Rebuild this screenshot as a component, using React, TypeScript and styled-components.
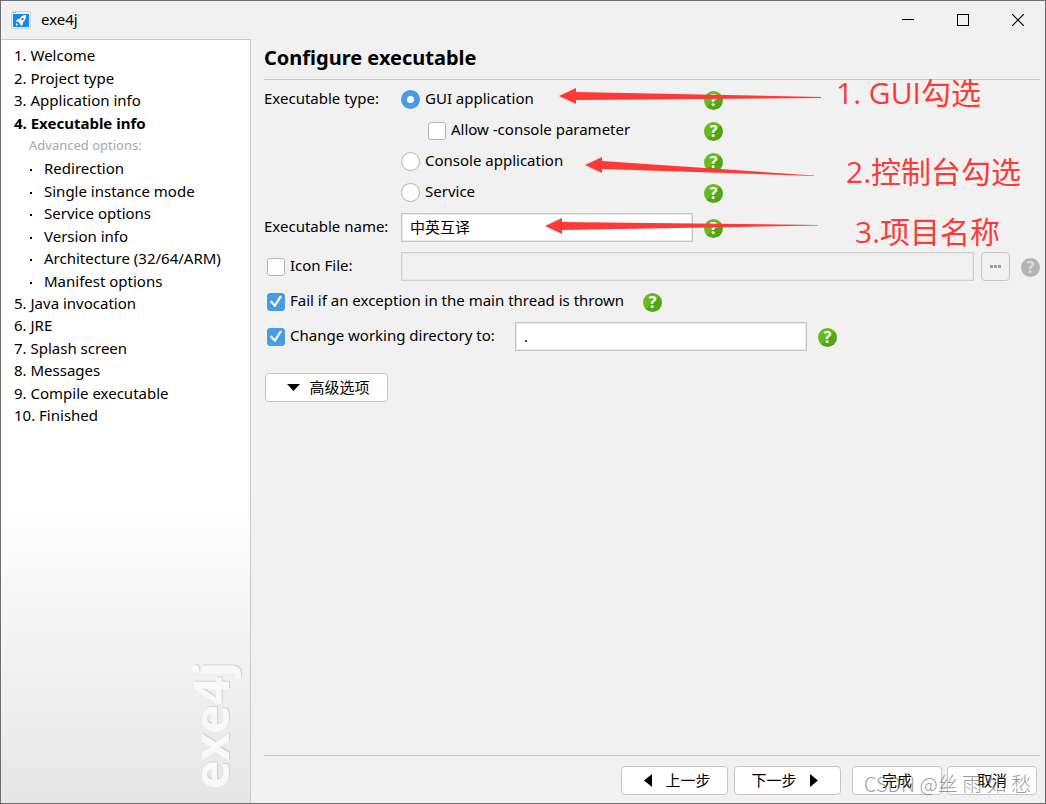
import React from "react";
import styled, { createGlobalStyle, css } from "styled-components";

const GlobalStyle = createGlobalStyle`
  * { box-sizing: border-box; }
  body {
    margin: 0;
    background: #f1f1f1;
    color: #000;
    font: 15px/20px "Noto Sans", "Noto Sans CJK SC", sans-serif;
  }
  button, input { font: inherit; color: inherit; }
`;

const Window = styled.div`
  position: relative;
  display: flex;
  flex-direction: column;
  min-height: 100vh;
  border: 1px solid #6e6e6e;
  background: #f1f1f1;
`;

const TitleBar = styled.header`
  display: flex;
  align-items: center;
  height: 38px;
  padding-left: 10px;
  gap: 10px;
`;

const AppName = styled.span`
  flex: 1;
  padding-bottom: 2px;
`;

const WindowControls = styled.div`
  display: flex;
`;

const WindowButton = styled.button`
  display: grid;
  place-items: center;
  width: 55px;
  height: 38px;
  padding: 0;
  border: 0;
  background: none;
`;

const Body = styled.div`
  display: flex;
  flex: 1;
`;

const Sidebar = styled.nav`
  display: flex;
  flex-direction: column;
  justify-content: space-between;
  width: 250px;
  flex: none;
  border-top: 1px solid #c8c8c8;
  border-right: 1px solid #c8c8c8;
  background: linear-gradient(#fff 60%, #e6e6e6);
`;

const Steps = styled.ul`
  margin: 0;
  padding: 4px 0 0 13px;
  list-style: none;
`;

type StepKind = "step" | "current" | "heading" | "option";

const Step = styled.li<{ $kind: StepKind }>`
  height: 22px;
  line-height: 22px;
  white-space: nowrap;
  &:nth-child(odd) { height: 23px; }
  ${({ $kind }) => $kind === "current" && css`font-weight: 700;`}
  ${({ $kind }) => $kind === "heading" && css`
    padding-left: 15px;
    color: #a8a8a8;
    font-size: 13px;
  `}
  ${({ $kind }) => $kind === "option" && css`
    display: flex;
    align-items: center;
    gap: 12px;
    padding-left: 16px;
    &::before {
      content: "";
      width: 2px;
      height: 2px;
      margin-top: 4px;
      background: #000;
    }
  `}
`;

const Brand = styled.div`
  align-self: flex-end;
  margin-right: 8px;
  padding: 14px 0;
  color: #f9f9f9;
  font-size: 49px;
  font-weight: 700;
  line-height: 64px;
  writing-mode: vertical-rl;
  transform: rotate(180deg);
  text-shadow: 1px 1px 1px #d0d0d0;
`;

const Main = styled.main`
  display: flex;
  flex-direction: column;
  flex: 1;
  min-width: 0;
  padding: 0 5px 0 13px;
`;

const PageTitle = styled.h1`
  margin: 0 0 4px;
  padding: 5px 0 7px;
  border-bottom: 1px solid #c8c8c8;
  font-size: 20px;
  line-height: 28px;
`;

const Form = styled.form`
  display: flex;
  flex-direction: column;
  flex: 1;
  gap: 10px;
`;

const TypeGroup = styled.div`
  display: grid;
  grid-template-columns: 137px 303px auto;
  grid-auto-rows: 31px;
  justify-content: start;
  align-items: center;
  margin-bottom: -5px;
`;

const TypeChoice = styled.div<{ $nested?: boolean }>`
  grid-column: 2;
  padding-left: ${({ $nested }) => ($nested ? "27px" : "0")};
`;

const Row = styled.div<{ $short?: boolean }>`
  display: flex;
  align-items: center;
  height: ${({ $short }) => ($short ? "21px" : "29px")};
  gap: 11px;
`;

const Caption = styled.span`
  padding-bottom: 3px;
`;

const FieldLabel = styled.label`
  width: 126px;
  padding-bottom: 3px;
  white-space: nowrap;
`;

const Choice = styled.label<{ $width?: number }>`
  display: flex;
  align-items: center;
  flex: none;
  gap: 5px;
  width: ${({ $width }) => ($width ? `${$width}px` : "auto")};
  white-space: nowrap;
`;

const CheckBox = styled.input.attrs({ type: "checkbox" })`
  appearance: none;
  flex: none;
  width: 18px;
  height: 18px;
  margin: 0;
  border: 1px solid #b4b4b4;
  border-radius: 3px;
  background: #fff;
  &:checked {
    border-color: #4a9ae6;
    background: #4a9ae6;
  }
  &:checked::before {
    content: "";
    display: block;
    width: 16px;
    height: 16px;
    background: #fff;
    clip-path: polygon(12% 51%, 23% 44%, 42% 66%, 75% 13%, 87% 20%, 43% 88%);
  }
`;

const OuterCheckBox = styled(CheckBox)`
  margin-left: 3px;
`;

const Radio = styled.input.attrs({ type: "radio" })`
  appearance: none;
  flex: none;
  width: 19px;
  height: 19px;
  margin: 0;
  border: 1px solid #b4b4b4;
  border-radius: 50%;
  background: #fff;
  &:checked { border: 6px solid #4a9ae6; }
`;

const TextBox = styled.input.attrs({ type: "text" })<{ $fill?: boolean }>`
  flex: ${({ $fill }) => ($fill ? "1" : "none")};
  min-width: 0;
  width: 292px;
  height: 29px;
  padding: 0 8px 2px;
  border: 1px solid #c6c6c6;
  box-shadow: inset 0 0 0 1px #e8e8e8;
  background: #fff;
  &:disabled { background: #f1f1f1; border-color: #d0d0d0; }
`;

const Help = styled.button`
  flex: none;
  width: 19px;
  height: 19px;
  margin-top: 2px;
  padding: 0;
  border: 0;
  border-radius: 50%;
  background: linear-gradient(135deg, #68bb1e 50%, #52a616 50%);
  color: #fff;
  font: 700 16px/19px "Open Sans", sans-serif;
  text-align: center;
  &:disabled { background: #b4b4b4; color: #dcdcdc; }
`;

const PushButton = styled.button<{ $width: number }>`
  display: flex;
  align-items: center;
  justify-content: center;
  gap: 13px;
  width: ${({ $width }) => $width}px;
  height: 29px;
  padding: 0 0 1px;
  border: 1px solid #c6c6c6;
  border-radius: 4px;
  background: #fff;
  &:disabled { background: #f1f1f1; color: #a0a0a0; }
`;

const BrowseButton = styled(PushButton)`
  margin-left: -4px;
`;

const AdvancedButton = styled(PushButton)`
  gap: 9px;
  margin: 12px 0 0 1px;
  padding-left: 4px;
`;

const StepButton = styled(PushButton)<{ $direction: "back" | "next" }>`
  padding-${({ $direction }) => ($direction === "back" ? "left" : "right")}: 6px;
`;

const Footer = styled.footer`
  display: flex;
  justify-content: flex-end;
  gap: 6px;
  padding: 10px 3px 8px 0;
  border-top: 1px solid #c8c8c8;
`;

const FooterGroup = styled.div`
  display: flex;
  gap: 5px;
  margin-left: 5px;
`;

const Note = styled.div<{ $left: number; $top: number }>`
  position: absolute;
  left: ${({ $left }) => $left}px;
  top: ${({ $top }) => $top}px;
  color: #fd3a37;
  font-family: "Open Sans", "Noto Sans CJK SC", sans-serif;
  font-size: 30px;
  line-height: 40px;
  white-space: nowrap;
  pointer-events: none;
`;

const Arrows = styled.svg`
  position: absolute;
  left: 540px;
  top: 80px;
  pointer-events: none;
`;

const Watermark = styled.div`
  position: absolute;
  right: 14px;
  bottom: 6px;
  color: rgba(110, 110, 110, 0.7);
  font-family: "Noto Sans CJK SC", sans-serif;
  font-size: 20px;
  font-weight: 300;
  line-height: 26px;
  white-space: nowrap;
  pointer-events: none;
`;

const steps: [string, StepKind][] = [
  ["1. Welcome", "step"],
  ["2. Project type", "step"],
  ["3. Application info", "step"],
  ["4. Executable info", "current"],
  ["Advanced options:", "heading"],
  ["Redirection", "option"],
  ["Single instance mode", "option"],
  ["Service options", "option"],
  ["Version info", "option"],
  ["Architecture (32/64/ARM)", "option"],
  ["Manifest options", "option"],
  ["5. Java invocation", "step"],
  ["6. JRE", "step"],
  ["7. Splash screen", "step"],
  ["8. Messages", "step"],
  ["9. Compile executable", "step"],
  ["10. Finished", "step"],
];

const AppIcon = () => (
  <svg width="20" height="18" viewBox="0 0 20 18" aria-hidden="true">
    <rect x="0.5" y="0.5" width="19" height="17" rx="1" fill="#eee" stroke="#cfcfcf" />
    <rect x="2" y="3" width="16" height="13" fill="#1489f5" />
    <path d="M2 1.500h1M4 1.500h1" stroke="#e66" />
    <path d="M15 4c-3 0-5 1.500-6.500 4L6 8.500 5 10.500l2 .2L9.500 13l.2 2 2-1.300.3-2.400C14 9.500 15 7 15 4Z" fill="#fff" />
    <path d="m5 12 2 1.500L5 15Z" fill="#fff" />
    <circle cx="11.500" cy="8" r="1.200" fill="#e6453a" />
  </svg>
);

const Triangle = ({ points, width, height }: { points: string; width: number; height: number }) => (
  <svg width={width} height={height} aria-hidden="true">
    <polygon points={points} />
  </svg>
);

const HelpButton = ({ disabled }: { disabled?: boolean }) => (
  <Help type="button" aria-label="Help" disabled={disabled}>?</Help>
);

export default function App() {
  return (
    <>
      <GlobalStyle />
      <Window>
        <TitleBar>
          <AppIcon />
          <AppName>exe4j</AppName>
          <WindowControls>
            <WindowButton aria-label="Minimize">
              <svg width="12" height="12"><path d="M0 5.500h12" stroke="#000" /></svg>
            </WindowButton>
            <WindowButton aria-label="Maximize">
              <svg width="12" height="12"><rect x="0.5" y="0.5" width="11" height="11" fill="none" stroke="#000" /></svg>
            </WindowButton>
            <WindowButton aria-label="Close">
              <svg width="12" height="12"><path d="m0 0 12 12M12 0 0 12" stroke="#000" strokeWidth="1.200" /></svg>
            </WindowButton>
          </WindowControls>
        </TitleBar>
        <Body>
          <Sidebar>
            <Steps>
              {steps.map(([text, kind]) => (
                <Step key={text} $kind={kind}>{text}</Step>
              ))}
            </Steps>
            <Brand>exe4j</Brand>
          </Sidebar>
          <Main>
            <PageTitle>Configure executable</PageTitle>
            <Form onSubmit={(e) => e.preventDefault()}>
              <TypeGroup role="radiogroup" aria-labelledby="type-label">
                <Caption id="type-label">Executable type:</Caption>
                <TypeChoice>
                  <Choice><Radio name="type" defaultChecked /><Caption>GUI application</Caption></Choice>
                </TypeChoice>
                <HelpButton />
                <TypeChoice $nested>
                  <Choice><CheckBox /><Caption>Allow -console parameter</Caption></Choice>
                </TypeChoice>
                <HelpButton />
                <TypeChoice>
                  <Choice><Radio name="type" /><Caption>Console application</Caption></Choice>
                </TypeChoice>
                <HelpButton />
                <TypeChoice>
                  <Choice><Radio name="type" /><Caption>Service</Caption></Choice>
                </TypeChoice>
                <HelpButton />
              </TypeGroup>
              <Row>
                <FieldLabel htmlFor="exe-name">Executable name:</FieldLabel>
                <TextBox id="exe-name" defaultValue="中英互译" />
                <HelpButton />
              </Row>
              <Row>
                <Choice $width={126}><OuterCheckBox /><Caption>Icon File:</Caption></Choice>
                <TextBox $fill disabled aria-label="Icon file path" />
                <BrowseButton $width={29} type="button" disabled aria-label="Browse">
                  <svg width="11" height="3"><path d="M0 1.500h3M4 1.500h3M8 1.500h3" stroke="#a0a0a0" strokeWidth="3" /></svg>
                </BrowseButton>
                <HelpButton disabled />
              </Row>
              <Row $short>
                <Choice $width={368}>
                  <OuterCheckBox defaultChecked />
                  <Caption>Fail if an exception in the main thread is thrown</Caption>
                </Choice>
                <HelpButton />
              </Row>
              <Row>
                <Choice $width={240}>
                  <OuterCheckBox defaultChecked />
                  <Caption>Change working directory to:</Caption>
                </Choice>
                <TextBox defaultValue="." aria-label="Working directory" />
                <HelpButton />
              </Row>
              <AdvancedButton $width={123} type="button">
                <Triangle width={13} height={7} points="0,0 13,0 6.500,7" />
                高级选项
              </AdvancedButton>
            </Form>
            <Footer>
              <StepButton $direction="back" $width={107} type="button">
                <Triangle width={8} height={13} points="8,0 8,13 0,6.500" />
                上一步
              </StepButton>
              <StepButton $direction="next" $width={107} type="button">
                下一步
                <Triangle width={8} height={13} points="0,0 0,13 8,6.500" />
              </StepButton>
              <FooterGroup>
                <PushButton $width={90} type="button">完成</PushButton>
                <PushButton $width={90} type="button">取消</PushButton>
              </FooterGroup>
            </Footer>
          </Main>
        </Body>
        <Arrows width="290" height="160" viewBox="541 81 290 160" fill="#fd3a37" aria-hidden="true">
          <polygon points="559,96 576,88 576,92 821,97 821,98 576,100 576,104" />
          <polygon points="585,165 602,157 602,161 814,175.500 814,176 602,169 602,173" />
          <polygon points="545,226 562,218 562,222 818,225 818,225.500 562,230 562,234" />
        </Arrows>
        <Note $left={835} $top={72}>1. GUI勾选</Note>
        <Note $left={845} $top={151}>2.控制台勾选</Note>
        <Note $left={854} $top={211}>3.项目名称</Note>
        <Watermark>CSDN @丝 雨 如 愁</Watermark>
      </Window>
    </>
  );
}
